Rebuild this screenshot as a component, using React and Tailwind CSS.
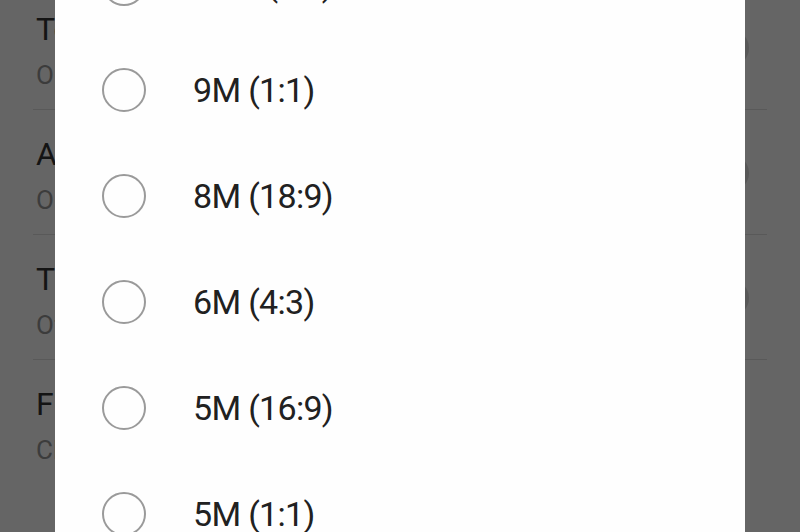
import React from 'react';

const settings = [
  { title: 'Touch to capture', sub: 'On', toggle: true },
  { title: 'Auto night mode', sub: 'On', toggle: true },
  { title: 'Timer', sub: 'Off', toggle: true },
  { title: 'Flash', sub: 'Close', toggle: false },
];

const sizes = ['12M (4:3)', '9M (1:1)', '8M (18:9)', '6M (4:3)', '5M (16:9)', '5M (1:1)'];

export default function App() {
  return (
    <div
      className="relative w-[800px] h-[532px] overflow-hidden bg-[#656565]"
      style={{ fontFamily: 'Roboto, "Noto Sans", sans-serif' }}
    >
      {/* settings list behind the dim */}
      <div className="-mt-[15px]">
        {settings.map((s) => (
          <div
            key={s.title}
            className={`h-[125px] mx-[33px] flex items-start justify-between ${s.toggle ? 'border-b border-[#595959]' : ''}`}
          >
            <div className="pt-[24px] pl-[3px]">
              <div className="text-[32px] leading-[40px] text-[#141414]">{s.title}</div>
              <div className="mt-[10px] text-[26px] leading-[32px] text-[#3c3c3c]">{s.sub}</div>
            </div>
            {s.toggle && <div className="mt-[45px] mr-[18px] w-[36px] h-[36px] rounded-full bg-[#575757]" />}
          </div>
        ))}
      </div>

      {/* dialog */}
      <div className="absolute left-[55px] top-[-69px] w-[690px] bg-[#fefefe]">
        {sizes.map((label) => (
          <div key={label} className="h-[106px] flex items-center pl-[47px]">
            <span className="w-[44px] h-[44px] rounded-full border-[2.5px] border-[#9a9a9a] shrink-0" />
            <span className="ml-[47px] text-[34px] leading-none text-[#212121] tracking-[-0.7px]">{label}</span>
          </div>
        ))}
      </div>
    </div>
  );
}
